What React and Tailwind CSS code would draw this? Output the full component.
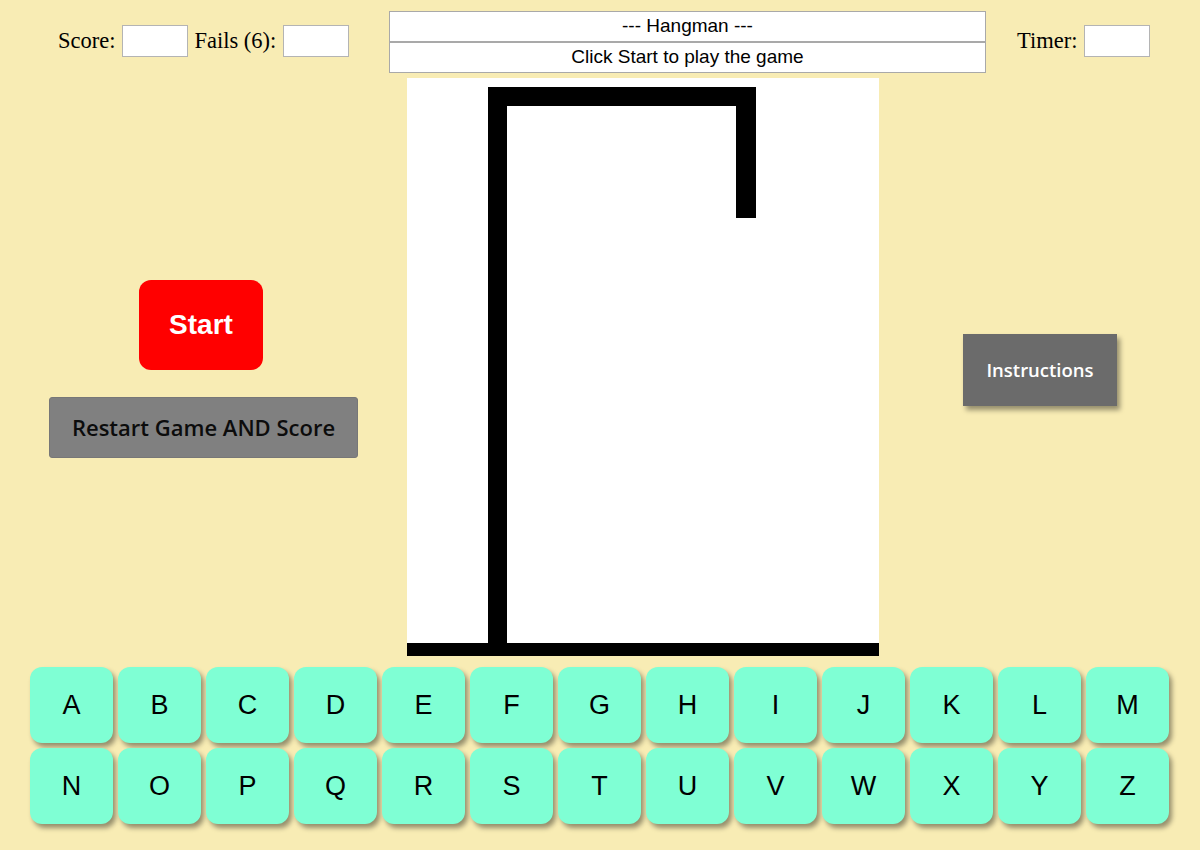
const letters = 'ABCDEFGHIJKLMNOPQRSTUVWXYZ'.split('');

const Field = () => (
    <input className="h-[32px] w-[66px] border border-[#b4b4b4] bg-white outline-none" readOnly />
);

const App = () => {
    return (
        <div className="h-[850px] w-[1200px] overflow-hidden bg-[#f8ecb4] font-['Liberation_Sans',Arial,sans-serif] text-black">
            {/* top bar */}
            <div className="flex h-[78px] pt-[11px]">
                <div className="flex h-[60px] w-[389px] items-center pl-[58px] font-['Liberation_Serif','Times_New_Roman',serif] text-[22.5px]">
                    <span className="mr-[7px]">Score:</span>
                    <Field />
                    <span className="ml-[6px] mr-[7px]">Fails (6):</span>
                    <Field />
                </div>
                <div className="w-[597px]">
                    <div className="flex h-[31px] items-center justify-center border border-[#a9a9a9] bg-white text-[19px]">--- Hangman ---</div>
                    <div className="flex h-[31px] items-center justify-center border border-[#a9a9a9] bg-white text-[19px]">Click Start to play the game</div>
                </div>
                <div className="flex h-[60px] flex-1 items-center pl-[31px] font-['Liberation_Serif','Times_New_Roman',serif] text-[22.5px]">
                    <span className="mr-[7px]">Timer:</span>
                    <Field />
                </div>
            </div>

            {/* middle */}
            <div className="flex h-[578px]">
                <div className="flex w-[407px] flex-col items-start pt-[202px]">
                    <button className="ml-[139px] h-[90px] w-[124px] rounded-[12px] bg-[#ff0000] text-[28px] font-bold text-white">
                        Start
                    </button>
                    <button className="mt-[27px] ml-[49px] h-[61px] w-[309px] rounded-[3px] border border-[#777] bg-[#808080] font-['Open_Sans',sans-serif] text-[22px] font-semibold text-[#0c0c0c]">
                        Restart Game AND Score
                    </button>
                </div>
                <svg width="472" height="578" viewBox="0 0 472 578" className="block shrink-0 bg-white">
                    <rect x="81" y="9" width="19" height="560" fill="#000" />
                    <rect x="81" y="9" width="268" height="19" fill="#000" />
                    <rect x="329" y="9" width="20" height="131" fill="#000" />
                    <rect x="0" y="565" width="472" height="13" fill="#000" />
                </svg>
                <div className="flex-1 pl-[84px] pt-[256px]">
                    <button className="h-[72px] w-[154px] bg-[#6b6b6b] font-['Open_Sans',sans-serif] text-[18.5px] font-semibold text-white shadow-[3px_4px_5px_rgba(0,0,0,0.4)]">
                        Instructions
                    </button>
                </div>
            </div>

            {/* keyboard */}
            <div className="grid grid-cols-[repeat(13,83px)] gap-[5px] pl-[30px] pt-[11px]">
                {letters.map(l => (
                    <button
                        key={l}
                        className="h-[76px] rounded-[12px] bg-[#7fffd4] text-[27px] text-black shadow-[3px_4px_5px_rgba(0,0,0,0.4)]"
                    >
                        {l}
                    </button>
                ))}
            </div>
        </div>
    );
};

export default App;
